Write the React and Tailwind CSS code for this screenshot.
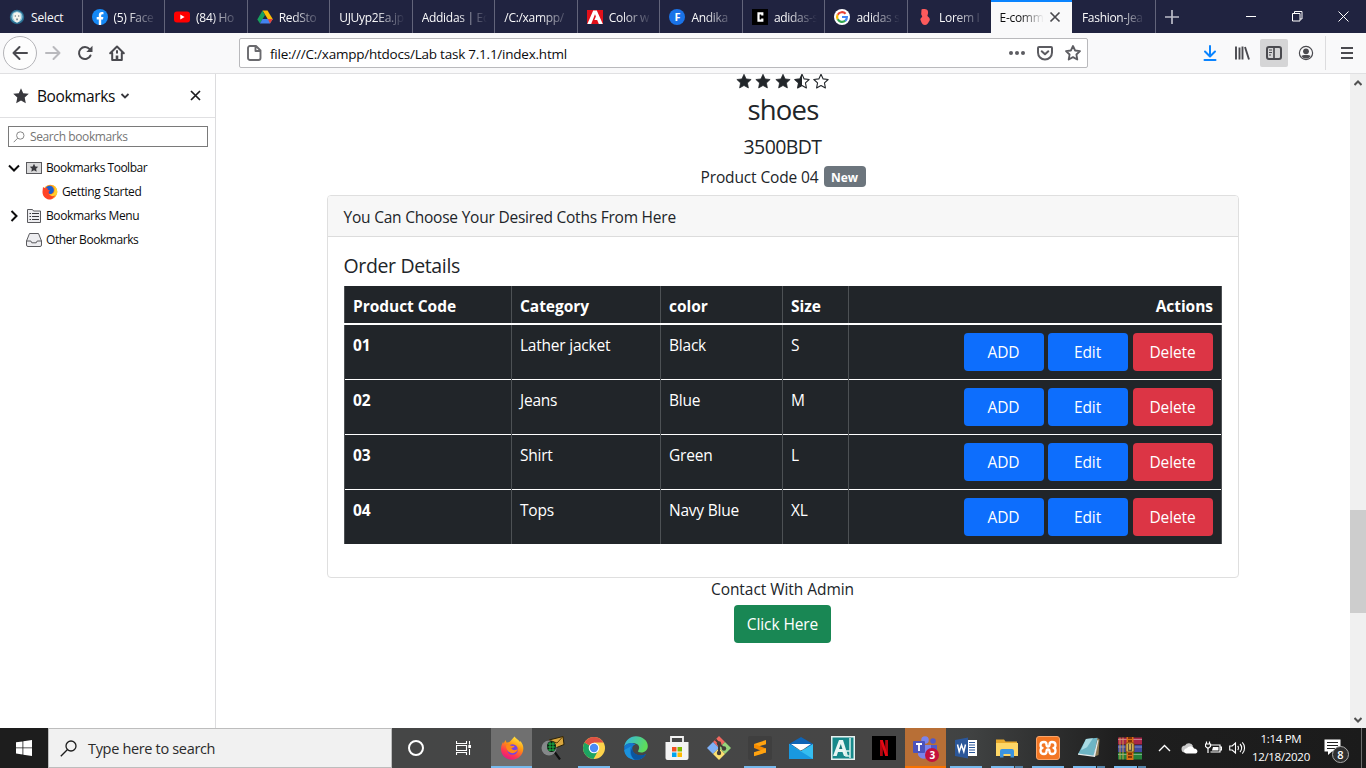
import React from "react";

/* ---------- tab strip ---------- */

const TabIcon = ({ kind }) => {
  switch (kind) {
    case "lion":
      return (
        <svg width="16" height="16" viewBox="0 0 16 16">
          <circle cx="8" cy="8" r="7.200" fill="#2a6f92" />
          <circle cx="8" cy="7.800" r="5.600" fill="#8fc6da" />
          <path d="M4.500 4.500L8 3l3.500 1.500.5 4.500-2 3.500-2 1.300-2-1.300-2-3.500z" fill="#f4f4ee" />
          <path d="M5.700 6.500h1.300v1H5.700zM9 6.500h1.300v1H9zM7.400 9.500h1.300V11.300H7.400z" fill="#4f6470" />
        </svg>
      );
    case "facebook":
      return (
        <svg width="16" height="16" viewBox="0 0 16 16">
          <circle cx="8" cy="8" r="8" fill="#1588f5" />
          <path d="M6.800 16v-5.500H4.700V8h2.100V6.200c0-2.100 1.200-3.200 3-3.200.9 0 1.700.15 1.700.15v2h-1c-1 0-1.300.6-1.300 1.250V8h2.200l-.4 2.500H9.200V16z" fill="#fff" />
        </svg>
      );
    case "youtube":
      return (
        <svg width="16" height="16" viewBox="0 0 16 16">
          <rect x="0" y="2.500" width="16" height="11" rx="3" fill="#f00" />
          <path d="M6.300 5.600v4.800L10.600 8z" fill="#fff" />
        </svg>
      );
    case "drive":
      return (
        <svg width="16" height="16" viewBox="0 0 16 16">
          <path d="M5.500 1.500h5L16 10.500h-5z" fill="#fbbc04" />
          <path d="M5.500 1.500 8 6 3 14.500 .3 10.500z" fill="#17a05d" />
          <path d="M5.500 10H15.700L13 14.500H3z" fill="#4382f0" />
          <path d="M10.900 10h4.900L13 14.500z" fill="#e94335" />
        </svg>
      );
    case "adobe":
      return (
        <svg width="16" height="16" viewBox="0 0 16 16">
          <rect y="1" width="16" height="14" fill="#e1101a" />
          <path d="M6.200 1.500h3.600L15.800 15h-4l-1.600-4H7.400L8.900 7.600 8 5.300 4.200 15H.3z" fill="#fff" />
        </svg>
      );
    case "andika":
      return (
        <span className="flex size-4 items-center justify-center rounded-full bg-[#1a73e8] text-[11px] leading-none font-bold text-white">F</span>
      );
    case "c":
      return (
        <svg width="16" height="16" viewBox="0 0 16 16">
          <rect width="16" height="16" fill="#000" />
          <path d="M10.300 6.500V4.300H6.500v7.400h3.800v-2.200" fill="none" stroke="#fff" strokeWidth="2.200" />
        </svg>
      );
    case "google":
      return (
        <svg width="16" height="16" viewBox="0 0 16 16">
          <circle cx="8" cy="8" r="8" fill="#fff" />
          <g fill="none" strokeWidth="2.200">
            <path d="M11.600 4.700A5 5 0 0 0 3.700 5.700" stroke="#ea4335" />
            <path d="M3.700 5.600a5 5 0 0 0 0 4.800" stroke="#fbbc05" />
            <path d="M3.700 10.300a5 5 0 0 0 7.600 1.400" stroke="#34a853" />
            <path d="M8 8h4.900a5 5 0 0 1-1.700 3.800" stroke="#4285f4" />
          </g>
        </svg>
      );
    case "lorem":
      return (
        <svg width="16" height="16" viewBox="0 0 16 16">
          <path d="M4.500.5C6-.2 9 0 10.300 1c1 1 .9 3.500.3 5C10 7 11 7.500 12 8.500c1.200 1.200 1 3-.2 4.300C11 14.500 10 16 8 16s-3-1.500-3.500-2.500L3.300 10.500c.2-1.500 1.700-2 1.900-3C5 6.500 4.200 6 4.200 5z" fill="#fb5a5c" />
        </svg>
      );
    default:
      return null;
  }
};

const TABS = [
  { icon: "lion", title: "Select", plain: true },
  { icon: "facebook", title: "(5) Face" },
  { icon: "youtube", title: "(84) Ho" },
  { icon: "drive", title: "RedSto" },
  { title: "UJUyp2Ea.jp" },
  { title: "Addidas | Ec" },
  { title: "/C:/xampp/" },
  { icon: "adobe", title: "Color w" },
  { icon: "andika", title: "Andika" },
  { icon: "c", title: "adidas-s" },
  { icon: "google", title: "adidas s" },
  { icon: "lorem", title: "Lorem I", last: true },
];

const FADE = "[mask-image:linear-gradient(to_right,#000_calc(100%-30px),transparent)]";

const TabStrip = () => (
  <div className="flex h-[33px] shrink-0 bg-[#202340] text-[12px] tracking-[-0.3px] text-[#f9f9fa]">
    {TABS.map((t) => (
      <div key={t.title} className={`flex w-[82.55px] shrink-0 items-center pr-[7px] pl-[9px] ${t.last ? "" : "border-r border-[#62647a]"}`}>
        {t.icon && <span className="mr-[6px] shrink-0"><TabIcon kind={t.icon} /></span>}
        <span className={`min-w-0 flex-1 overflow-hidden pt-[2px] whitespace-nowrap ${t.plain ? "tracking-[-0.1px]" : FADE}`}>{t.title}</span>
      </div>
    ))}
    <div className="flex w-[81.400px] shrink-0 items-center border-t-[2px] border-[#0a84ff] bg-[#f9f9fa] pr-[11px] pl-[9px] text-[#0c0c0d]">
      <span className="w-[44px] overflow-hidden whitespace-nowrap [mask-image:linear-gradient(to_right,#000_calc(100%-24px),transparent)]">E-comm</span>
      <svg className="mb-[2px] ml-[5px]" width="12" height="12" viewBox="0 0 12 12"><path d="M1.500 1.500l9 9m0-9l-9 9" stroke="#4a4a4f" strokeWidth="1.700" /></svg>
    </div>
    <div className="flex w-[84px] shrink-0 items-center border-r border-[#62647a] pr-[10px] pl-[10px]">
      <span className="min-w-0 flex-1 overflow-hidden pt-[2px] whitespace-nowrap [mask-image:linear-gradient(to_right,#000_calc(100%-26px),transparent)]">Fashion-Jea</span>
    </div>
    <div className="flex w-[33px] items-center justify-center">
      <svg width="14" height="14" viewBox="0 0 14 14"><path d="M7 0v14M0 7h14" stroke="#bcbdc9" strokeWidth="1.700" /></svg>
    </div>
    <div className="ml-auto flex">
      <div className="flex w-[46px] items-center justify-center"><svg width="10" height="10"><path d="M0 4.500h10" stroke="#fff" /></svg></div>
      <div className="flex w-[46px] items-center justify-center">
        <svg width="11" height="11" fill="none" stroke="#fff"><path d="M.5 2.500h7.500v7.500H.5zM2.500 2.500v-2h7.500v7.500H8" /></svg>
      </div>
      <div className="flex w-[46px] items-center justify-center"><svg width="11" height="11"><path d="M.5.5l10 10m0-10l-10 10" stroke="#fff" /></svg></div>
    </div>
  </div>
);

/* ---------- navigation toolbar ---------- */

const NavBar = () => (
  <div className="flex h-[41px] shrink-0 items-center border-b border-[#e0e0e2] bg-[#f9f9fa] pr-[13px] pl-[3px]">
    <div className="flex size-[34px] items-center justify-center rounded-full border border-[#b4b4b8] bg-[#fdfdfd]">
      <svg width="16" height="16" viewBox="0 0 16 16" fill="none" stroke="#4a4a4f" strokeWidth="2" strokeLinecap="round" strokeLinejoin="round"><path d="M1.500 8H15M7.500 2l-6 6 6 6" /></svg>
    </div>
    <svg className="ml-[8px]" width="16" height="16" viewBox="0 0 16 16" fill="none" stroke="#b9b9bd" strokeWidth="2" strokeLinecap="round" strokeLinejoin="round"><path d="M1 8h13.500M8.500 2l6 6-6 6" /></svg>
    <svg className="ml-[16px]" width="16" height="16" viewBox="0 0 16 16" fill="none" stroke="#4a4a4f" strokeWidth="2" strokeLinecap="round">
      <path d="M12.600 4.200A6 6 0 1 0 13.500 10.500" /><path d="M15.500.8v6.200H9.300z" fill="#4a4a4f" stroke="none" />
    </svg>
    <svg className="ml-[16px]" width="16" height="16" viewBox="0 0 16 16" fill="none" stroke="#4a4a4f" strokeWidth="2" strokeLinecap="round" strokeLinejoin="round">
      <path d="M1.200 8.300L8 1.500l6.800 6.800M3.200 8v7h9.600V8" /><path d="M8 15v-4.500" strokeWidth="2.600" strokeLinecap="butt" /><path d="M8 6v1.800" />
    </svg>
    <div className="ml-[114px] flex h-[30px] w-[849px] shrink-0 items-center rounded-[2px] border border-[#b9b9bc] bg-white pr-[6px] pl-[7px]">
      <svg width="15" height="16" viewBox="0 0 15 16" fill="none" stroke="#6a6a6e" strokeWidth="1.900" strokeLinejoin="round"><path d="M3 1h6l4.500 4.500V13a2 2 0 0 1-2 2H3a2 2 0 0 1-2-2V3a2 2 0 0 1 2-2zM8.500 1v5h5" /></svg>
      <span className="ml-[8px] pt-[2px] text-[13.500px] tracking-[-0.23px] text-[#0c0c0d]">file:///C:/xampp/htdocs/Lab task 7.1.1/index.html</span>
      <svg className="ml-auto" width="16" height="16" viewBox="0 0 16 16" fill="#5c5c61"><circle cx="2" cy="8" r="2" /><circle cx="8" cy="8" r="2" /><circle cx="14" cy="8" r="2" /></svg>
      <svg className="ml-[12px]" width="16" height="16" viewBox="0 0 16 16" fill="none" stroke="#5c5c61" strokeWidth="2" strokeLinecap="round" strokeLinejoin="round"><path d="M2 2h12a1 1 0 0 1 1 1v4.500a7 7 0 0 1-14 0V3a1 1 0 0 1 1-1z" /><path d="M4.700 6.300L8 9.300l3.300-3" /></svg>
      <svg className="ml-[12px]" width="16" height="16" viewBox="0 0 16 16" fill="none" stroke="#5c5c61" strokeWidth="1.800" strokeLinejoin="round"><path d="M8 1l2.100 4.500 4.900.6-3.600 3.400.9 5L8 12.100 3.700 14.500l.9-5L1 6.100l4.900-.6z" /></svg>
    </div>
    <svg className="ml-[114px]" width="16" height="16" viewBox="0 0 16 16" fill="none" stroke="#0a84ff" strokeWidth="2" strokeLinecap="round" strokeLinejoin="round"><path d="M8 1v10M3 6.500l5 5 5-5M2.500 15h11" /></svg>
    <svg className="ml-[16px]" width="16" height="16" viewBox="0 0 16 16" fill="none" stroke="#4a4a4f" strokeWidth="1.900"><path d="M2 1.500v13M5.500 2.500v12M8.500 1.500v13M11 2l4 12.500" /></svg>
    <div className="ml-[10px] flex size-[28px] items-center justify-center rounded-[2px] bg-[#d5d5d6]">
      <svg width="16" height="16" viewBox="0 0 16 16" fill="none" stroke="#4a4a4f"><rect x="1" y="2" width="14" height="12" rx="2" strokeWidth="2" /><path d="M8 2v12" strokeWidth="1.700" /><path d="M3 5h3M3 7.500h3M3 10h2" /></svg>
    </div>
    <svg className="ml-[10px]" width="16" height="16" viewBox="0 0 16 16"><circle cx="8" cy="8" r="6.600" fill="none" stroke="#4a4a4f" strokeWidth="1.200" /><circle cx="8" cy="6.300" r="2.900" fill="#4a4a4f" /><path d="M3.400 11c1-.8 2.500-.9 3-.9h3.200c.5 0 2 .1 3 .9A5.400 5.400 0 0 1 3.400 11z" fill="#4a4a4f" /></svg>
    <span className="ml-[11px] h-[34px] w-px bg-[#dcdcde]" />
    <svg className="ml-auto" width="12" height="14" viewBox="0 0 12 14"><path d="M0 2h12M0 7h12M0 12h12" stroke="#4a4a4f" strokeWidth="2" /></svg>
  </div>
);

/* ---------- bookmarks sidebar ---------- */

const FirefoxLogo = ({ size }) => (
  <svg width={size} height={size} viewBox="0 0 24 24">
    <defs>
      <linearGradient id="fxBody" x1=".8" y1="0" x2=".3" y2="1">
        <stop offset="0" stopColor="#fff14a" /><stop offset=".4" stopColor="#ff980e" /><stop offset=".75" stopColor="#ff3750" /><stop offset="1" stopColor="#e31587" />
      </linearGradient>
    </defs>
    <path d="M14.500.5c1.500 2 4 3.500 5.500 5.500l.3-1C22.500 7.500 23.500 10 23.300 13 23 19 18 23.700 12 23.700S1 19 1 13c0-3 1-5.500 2.200-7.300l.3 2L5.500 4l1 2.500c2 0 3-.2 4-1.500z" fill="url(#fxBody)" />
    <circle cx="12.500" cy="13.500" r="5.300" fill="#7542e5" />
    <path d="M6 9.500c2-1.500 4-.5 5 .3l3.500.2c-.2 1.500-2 1.700-3 2 .3 2.500 4.500 3 6.500.5-1 4.500-5 5.500-8 4-2.500-1-4-4-4-7z" fill="#ff8a16" />
  </svg>
);

const ClassicFirefox = () => (
  <svg width="16" height="16" viewBox="0 0 16 16">
    <circle cx="8.300" cy="7.800" r="7" fill="#ff9a1f" />
    <circle cx="7.600" cy="6" r="4.300" fill="#1a5fd0" />
    <path d="M1 3l2 1.300L5.500 4l.3 1.700L8 6.500 6.500 8l.5 1.500c2 1.500 4 .3 4.700-1.200L14 10c-1 4-4 5.700-7 5.500C3 15 .3 11.500.5 7.500z" fill="#ff4326" />
    <path d="M10 .8c3 2 3.500 5 2 7.700-1 1.500-3 2.300-5 1.500 1.500 2.500 5 3 7 .5-1 2-2.500 3.500-5 4 5-.5 7-4.500 6-8.500-.5-2.500-2.500-4.800-5-5.200z" fill="#ffd02e" />
  </svg>
);

const Chevron = ({ open }) => (
  <svg width="12" height="12" viewBox="0 0 12 12" fill="none" stroke="#0c0c0d" strokeWidth="2"><path d={open ? "M1 3.500l5 5 5-5" : "M3.500 1l5 5-5 5"} /></svg>
);

const Sidebar = () => (
  <div className="flex w-[216px] shrink-0 flex-col border-r border-[#dcdcde] bg-white text-[#0c0c0d]">
    <div className="flex h-[44px] items-center border-b border-[#e0e0e2] pl-[13px]">
      <svg width="16" height="16" viewBox="0 0 16 16" fill="#38383d"><path d="M8 .2l2.200 5 5.600.6-4.100 3.800 1.100 5.700L8 12.500l-4.800 2.800 1.100-5.700L.2 5.800l5.600-.6z" /></svg>
      <span className="ml-[8px] w-[78px] pt-[3px] text-[15.500px] tracking-[-0.42px]">Bookmarks</span>
      <svg className="ml-[5px]" width="10" height="8" viewBox="0 0 10 8" fill="none" stroke="#38383d" strokeWidth="1.800"><path d="M1.500 2L5 5.500 8.500 2" /></svg>
      <svg className="ml-[59.500px]" width="11" height="11" viewBox="0 0 11 11"><path d="M1 1l9 9m0-9l-9 9" stroke="#1c1c1f" strokeWidth="1.700" /></svg>
    </div>
    <div className="mt-[8px] ml-[8px] flex h-[21px] w-[200px] items-center border border-[#7a7a7a] pl-[4px]">
      <svg width="12" height="12" viewBox="0 0 12 12" fill="none" stroke="#888" strokeWidth="1"><circle cx="7.300" cy="4.500" r="3.700" /><path d="M4.700 7.200L.7 11.200" /></svg>
      <span className="ml-[5px] pt-px text-[12px] tracking-[-0.4px] text-[#757575]">Search bookmarks</span>
    </div>
    <div className="mt-[9px] text-[12px] tracking-[-0.48px]">
      <div className="flex h-6 items-center pl-[8px]">
        <Chevron open />
        <svg className="mr-[4px] ml-[6px]" width="16" height="12" viewBox="0 0 16 12"><rect x=".5" y=".5" width="15" height="11" fill="#d9d9da" stroke="#5a5a5e" /><path d="M8 1.800l1.300 2.700 2.900.3-2.100 2 .6 3L8 8.300 5.300 9.800l.6-3-2.100-2 2.900-.3z" fill="#38383d" /></svg>
        <span>Bookmarks Toolbar</span>
      </div>
      <div className="flex h-6 items-center pl-[42px]">
        <ClassicFirefox />
        <span className="ml-[4px] tracking-[-0.36px]">Getting Started</span>
      </div>
      <div className="flex h-6 items-center pl-[8px]">
        <Chevron />
        <svg className="mr-[4px] ml-[6px]" width="16" height="14" viewBox="0 0 16 14"><path d="M1.500.5h5l1 1.500h7v11.500h-13z" fill="#ededf0" stroke="#5a5a5e" /><path d="M6 4.500h7M6 7.500h7M6 10.500h7M3.500 4.500H5M3.500 7.500H5M3.500 10.500H5" stroke="#38383d" /></svg>
        <span className="tracking-[-0.38px]">Bookmarks Menu</span>
      </div>
      <div className="flex h-6 items-center pl-[26px]">
        <svg className="mr-[4px]" width="16" height="14" viewBox="0 0 16 14"><path d="M3.500.5h9l3 7.500v4a1.500 1.500 0 0 1-1.500 1.500H2A1.500 1.500 0 0 1 .5 12V8z" fill="#ededf0" stroke="#5a5a5e" /><path d="M.5 8h4.300l1 1.800h4.400l1-1.800h4.300" fill="none" stroke="#5a5a5e" /></svg>
        <span className="tracking-[-0.44px]">Other Bookmarks</span>
      </div>
    </div>
  </div>
);

/* ---------- page ---------- */

const STAR = "M8 .8l2.150 4.600 5 .6-3.700 3.450.95 5L8 12l-4.400 2.450.95-5L.85 6l5-.6z";
const Star = ({ fill }) => (
  <svg width="16" height="15" viewBox="0 .5 16 15">
    {fill === "full" && <path d={STAR} fill="#212529" stroke="#212529" strokeWidth=".7" strokeLinejoin="round" />}
    {fill !== "full" && <path d={STAR} fill="none" stroke="#212529" strokeWidth="1.100" strokeLinejoin="round" />}
    {fill === "half" && <path d="M8 .8V12l-4.400 2.450.95-5L.85 6l5-.6z" fill="#212529" />}
  </svg>
);

const ROWS = [
  ["01", "Lather jacket", "Black", "S"],
  ["02", "Jeans", "Blue", "M"],
  ["03", "Shirt", "Green", "L"],
  ["04", "Tops", "Navy Blue", "XL"],
];
const GRID = "grid grid-cols-[167px_149px_122px_66px_374px]";
const CELL = "border-l border-[#4d5154]";

const Button = ({ color, children }) => (
  <button className={`h-[38px] w-[80px] rounded-[4px] pr-[7px] pl-[6px] tracking-[-0.1px] text-white ${color}`}>{children}</button>
);

const Row = ({ data, first }) => {
  const inner = first ? "h-[54px] pr-[8px] pl-[8px] pt-[8px]" : "h-[55px] border-t border-white pr-[8px] pl-[8px] pt-[8px]";
  return (
    <div className={GRID}>
      {data.map((v, i) => (
        <div key={i} className={CELL}><div className={`${inner} ${i === 0 ? "font-bold tracking-normal" : ""}`}>{v}</div></div>
      ))}
      <div className={`${CELL} border-r`}>
        <div className={`${inner} flex justify-end`}>
          <Button color="bg-[#0d6efd]">ADD</Button>
          <span className="w-[4px]" />
          <Button color="bg-[#0d6efd]">Edit</Button>
          <span className="w-[5px]" />
          <Button color="bg-[#dc3545]">Delete</Button>
        </div>
      </div>
    </div>
  );
};

const Page = () => (
  <div className="flex min-w-0 flex-1 flex-col items-center bg-white text-[15.500px] leading-[24px] tracking-[-0.22px] text-[#212529]">
    <div className="mr-[1px] flex h-[16px] gap-[3.200px]">
      <Star fill="full" /><Star fill="full" /><Star fill="full" /><Star fill="half" /><Star fill="empty" />
    </div>
    <h3 className="mt-[3px] text-[27.500px] leading-[34px] tracking-[-0.8px]">shoes</h3>
    <h5 className="mr-[1px] mt-[8px] text-[19.500px] leading-[24px] tracking-[-0.6px]">3500BDT</h5>
    <div className="mt-[7px] flex h-[21px] items-center">
      <span className="tracking-[-0.13px]">Product Code 04</span>
      <span className="ml-[5px] flex h-[21px] w-[42px] items-center justify-center rounded-[4px] bg-[#6c757d] pt-[2px] text-[12px] leading-none font-bold tracking-normal text-white">New</span>
    </div>
    <div className="mt-[8px] flex h-[383px] w-[912px] flex-col rounded-[4px] border border-[#dfdfdf]">
      <div className="flex h-[41px] items-center rounded-t-[3px] border-b border-[#dcdcdc] bg-[#f7f7f7] pt-px pl-[15.500px]">You Can Choose Your Desired Coths From Here</div>
      <div className="pt-[17px] pl-[16px]">
        <h5 className="mb-[8px] -ml-[0.500px] text-[19.500px] leading-[24px] tracking-[-0.36px]">Order Details</h5>
        <div className="w-[878px] bg-[#212529] text-white">
          <div className={`${GRID} h-[37px] font-bold tracking-[-0.04px]`}>
            {["Product Code", "Category", "color", "Size"].map((h) => <div key={h} className={`${CELL} pr-[8px] pl-[8px] pt-[8px]`}>{h}</div>)}
            <div className={`${CELL} border-r px-[8px] pt-[8px] text-right`}>Actions</div>
          </div>
          <div className="h-[2px] bg-white" />
          {ROWS.map((r, i) => <Row key={r[0]} data={r} first={i === 0} />)}
        </div>
      </div>
    </div>
    <div className="mt-[-1px] mr-[1px] tracking-[-0.05px]">Contact With Admin</div>
    <button className="mt-[4px] mr-[1px] h-[38px] w-[97px] rounded-[4px] bg-[#198754] tracking-[-0.1px] text-white">Click Here</button>
  </div>
);

const Scrollbar = () => (
  <div className="flex w-[16px] shrink-0 flex-col items-center bg-[#f0f0f0]">
    <div className="flex h-[17px] items-center"><svg width="8" height="6" fill="none" stroke="#505050" strokeWidth="2"><path d="M.5 5L4 1.500 7.500 5" /></svg></div>
    <div className="mt-[419px] h-[103px] w-full bg-[#cdcdcd]" />
    <div className="mt-auto flex h-[17px] items-center"><svg width="8" height="6" fill="none" stroke="#505050" strokeWidth="2"><path d="M.5 1L4 4.500 7.500 1" /></svg></div>
  </div>
);

/* ---------- taskbar ---------- */

const AppIcon = ({ kind }) => {
  switch (kind) {
    case "firefox":
      return <FirefoxLogo size={24} />;
    case "maildish":
      return (
        <svg width="24" height="24" viewBox="0 0 24 24">
          <path d="M8 4L22 .5l1 8L12 13z" fill="#d9a63e" stroke="#2b2208" />
          <path d="M8 4l8 3L22 .5" fill="none" stroke="#5c400c" />
          <path d="M12 14l3 4 4 5.500" fill="none" stroke="#111" strokeWidth="2.200" />
          <circle cx="8" cy="12" r="7.500" fill="#85888a" /><ellipse cx="10.500" cy="10.500" rx="4.500" ry="5.500" fill="#071f0d" />
          <path d="M7 8h7M6.500 11h8M7 14h7M9 6v9M12 6v9" stroke="#1fbf4e" strokeWidth=".9" />
        </svg>
      );
    case "chrome":
      return (
        <svg width="24" height="24" viewBox="0 0 24 24">
          <circle cx="12" cy="12" r="11" fill="#fdd34b" />
          <path d="M12 12L2.500 6.500A11 11 0 0 0 11.500 23l5-9z" fill="#1da462" />
          <path d="M12 12L2.500 6.500a11 11 0 0 1 19 0H12z" fill="#dd5144" />
          <circle cx="12" cy="12" r="5.300" fill="#fff" /><circle cx="12" cy="12" r="4.200" fill="#4c8bf5" />
        </svg>
      );
    case "edge":
      return (
        <svg width="24" height="24" viewBox="0 0 24 24">
          <defs><linearGradient id="edgeTop" x1="0" x2="1" y2=".3"><stop stopColor="#30b4ee" /><stop offset="1" stopColor="#5edc5a" /></linearGradient></defs>
          <path d="M.3 10.500C1 4.500 6 .2 12 .2c6.500 0 11.800 4.500 11.800 9.800 0 4-3 6.500-6.500 6.500-2.500 0-4-1-3-2 2-3 .5-6.500-3.500-7.200C6.500 6.600 2.500 8 .3 10.500z" fill="url(#edgeTop)" />
          <path d="M.3 10.500c2-4 9-4.500 11.200-2C8 9 7.500 13 9 15.800c2.500 4 8 5.200 13 2.200-2 4-6 6-10 5.900C5 23.800-.6 17.500.3 10.500z" fill="#1477d0" />
          <path d="M9.500 9C5 10.500 4 19 10.500 23.700 4 23 .5 19 .2 14z" fill="#1b92dd" />
          <path d="M8.300 12c-.3 5.500 6.700 9.500 13.700 6-2 4-7 6.500-11 5.700-4-2.200-5.200-8-2.700-11.700z" fill="#0b559f" />
        </svg>
      );
    case "store":
      return (
        <svg width="24" height="24" viewBox="0 0 24 24">
          <path d="M6 7V1h12v6" fill="none" stroke="#f3f3f3" strokeWidth="1.800" />
          <path d="M.5 6h23v16a2 2 0 0 1-2 2h-19a2 2 0 0 1-2-2z" fill="#f3f3f3" />
          <path d="M7 11h4.500v4.500H7z" fill="#f25022" /><path d="M12.500 11H17v4.500h-4.500z" fill="#7fba00" /><path d="M7 16.500h4.500V21H7z" fill="#00a4ef" /><path d="M12.500 16.500H17V21h-4.500z" fill="#ffb900" />
        </svg>
      );
    case "git":
      return (
        <svg width="24" height="24" viewBox="0 0 24 24">
          <path d="M12 0l6 6-6 6-6-6z" fill="#f0675f" /><path d="M6 6l6 6-6 6-6-6z" fill="#7fb0f5" /><path d="M18 6l6 6-6 6-6-6z" fill="#97d47a" /><path d="M12 12l6 6-6 6-6-6z" fill="#fbe071" />
          <path d="M8.500 3.500l3.500 3.800V17M12 7.500l5 5" stroke="#413c38" strokeWidth="2" fill="none" /><circle cx="12" cy="7.500" r="2.200" fill="#413c38" /><circle cx="17" cy="12.500" r="2.200" fill="#413c38" /><circle cx="12" cy="17" r="2.200" fill="#413c38" />
        </svg>
      );
    case "sublime":
      return (
        <svg width="24" height="24" viewBox="0 0 24 24">
          <rect width="24" height="24" rx="2" fill="#3f3f3f" />
          <path d="M6 8l12-4v4.200L6 12z" fill="#ffa20f" /><path d="M6 8l12 4.500v4L6 12z" fill="#f58a00" /><path d="M6 16.300l12-4v4.200L6 20.300z" fill="#ffa20f" />
        </svg>
      );
    case "mail":
      return (
        <svg width="24" height="24" viewBox="0 0 24 24">
          <path d="M0 8L12 1l12 7v3H0z" fill="#0f64b5" />
          <path d="M0 8l12 7 12-7v15H0z" fill="#35bdf0" /><path d="M0 8l24 15H0z" fill="#1998e0" /><path d="M2 8h20l-8 5.500-2.500 1z" fill="#fff" />
        </svg>
      );
    case "autodesk":
      return (
        <svg width="24" height="24" viewBox="0 0 24 24">
          <rect x=".75" y=".75" width="22.500" height="22.500" fill="#16888a" stroke="#e6f0ef" strokeWidth="1.500" />
          <path d="M2 20L8 4h4l5 16h-4l-1.500-4H7l-1.300 4z" fill="#e8f5f3" /><path d="M8 13l1.800-5 1.600 5z" fill="#187478" />
          <path d="M19 2v20M15 15h4v5h-4z" stroke="#d4eeea" fill="none" strokeWidth="1.500" />
        </svg>
      );
    case "netflix":
      return (
        <svg width="24" height="24" viewBox="0 0 24 24">
          <rect width="24" height="24" fill="#000" />
          <path d="M8 4h2.800v16H8zM13.200 4H16v16h-2.800z" fill="#b1060f" /><path d="M8 4h2.800L16 20h-2.800z" fill="#e50914" />
        </svg>
      );
    case "teams":
      return (
        <div className="relative size-[24px]">
          <svg width="24" height="24" viewBox="0 0 24 24">
            <circle cx="12" cy="4" r="3.800" fill="#7b83eb" /><circle cx="20" cy="5" r="2.800" fill="#5059c9" />
            <path d="M17 9h7v7a4 4 0 0 1-7 2z" fill="#5059c9" /><path d="M5 9h13v8a7 7 0 0 1-13 2z" fill="#7b83eb" />
            <rect y="5" width="12" height="12" rx="1" fill="#4b53bc" /><path d="M3 8h6M6 8v7" stroke="#fff" strokeWidth="1.800" />
          </svg>
          <span className="absolute top-[12px] left-[12px] flex size-[14px] items-center justify-center rounded-full bg-[#c4113d] text-[10px] leading-none font-bold text-white">3</span>
        </div>
      );
    case "word":
      return (
        <svg width="24" height="24" viewBox="0 0 24 24">
          <path d="M12 4h11v16H12z" fill="#fff" /><path d="M15 6.500h6M15 9h6M15 11.500h6M15 14h6M15 16.500h6" stroke="#2b579a" strokeWidth="1.200" />
          <path d="M1 4L14 1.500v21L1 20z" fill="#2b579a" /><path d="M3.500 8.500l1.700 7 2.300-6.500 2.300 6.500 1.700-7" stroke="#fff" strokeWidth="1.500" fill="none" />
        </svg>
      );
    case "explorer":
      return (
        <svg width="24" height="24" viewBox="0 0 24 24">
          <path d="M1 3.500h8l1.500 2H22V9H1z" fill="#e8a92c" /><path d="M1 7h22v13H1z" fill="#ffd766" />
          <path d="M5 21.500V15a2 2 0 0 1 2-2h10a2 2 0 0 1 2 2v6.500h-3.500V18h-7v3.500z" fill="#3b94e0" />
        </svg>
      );
    case "xampp":
      return (
        <svg width="24" height="24" viewBox="0 0 24 24">
          <rect x=".5" y=".5" width="23" height="23" rx="2.500" fill="#f37623" stroke="#f9a56a" />
          <path d="M8 6c2 0 2.500 1.200 2.500 2.500S11 10.500 12 10.500s1.500-.7 1.500-2S14 6 16 6s3.500 1.300 3.500 3-1 3-2 3c1 0 2 1.300 2 3s-1.500 3-3.500 3-2.500-1.200-2.500-2.500-.5-2-1.500-2-1.500.7-1.500 2S10 18 8 18s-3.500-1.300-3.500-3 1-3 2-3c-1 0-2-1.300-2-3S6 6 8 6z" fill="none" stroke="#fff" strokeWidth="2.300" strokeLinejoin="round" />
        </svg>
      );
    case "notepad":
      return (
        <svg width="24" height="24" viewBox="0 0 24 24">
          <path d="M20 2l2.500 1-1 16-4 1.500z" fill="#8d7a55" />
          <path d="M9 3l11.500-1.300L17 20 1 18z" fill="#6eb5c5" /><path d="M9 3l7-.8-6 9-6 3z" fill="#a9dbe3" />
          <path d="M1 17.500l15.500 2L20.500 4l1 .5L18 21 1 18.800z" fill="#e4eaeb" />
        </svg>
      );
    case "winrar":
      return (
        <svg width="24" height="24" viewBox="0 0 24 24">
          <path d="M0 1.500h24v7H0z" fill="#a72649" /><path d="M0 9h24v7H0z" fill="#3d4aa0" /><path d="M0 16.500h24v7H0z" fill="#24803b" />
          <path d="M0 3.500h24M0 11h24M0 18.500h24" stroke="#ffffff60" /><path d="M2 1.500v22M5 1.500v22" stroke="#d6a84a" strokeWidth=".9" />
          <path d="M8.500 1h7v23h-7z" fill="#d86d15" /><path d="M10 2h4M10 5h4M10 18h4M10 21h4" stroke="#612105" strokeWidth="1.500" />
          <rect x="8" y="7" width="8" height="9" rx="1" fill="#f2cf5e" stroke="#7a4308" /><path d="M10.500 8v6.500h3V8" fill="none" stroke="#65513a" strokeWidth="1.500" />
        </svg>
      );
    default:
      return null;
  }
};

const APPS = [
  { kind: "firefox", bg: "bg-[#707070]", bar: "wide" },
  { kind: "maildish" },
  { kind: "chrome", bar: "one" },
  { kind: "edge" },
  { kind: "store" },
  { kind: "git" },
  { kind: "sublime", bar: "one" },
  { kind: "mail" },
  { kind: "autodesk" },
  { kind: "netflix" },
  { kind: "teams", bg: "bg-[#b86f36]", bar: "alert" },
  { kind: "word", bar: "one" },
  { kind: "explorer", bar: "many" },
  { kind: "xampp", bar: "one" },
  { kind: "notepad", bar: "many" },
  { kind: "winrar", bar: "many" },
];

const Bar = ({ type }) => {
  if (type === "wide") return <span className="h-[2px] w-full bg-[#76b9ed]" />;
  if (type === "alert") return <span className="h-[2px] w-full bg-[#f77100]" />;
  if (type === "one") return <span className="h-[2px] w-[32px] bg-[#76b9ed]" />;
  if (type === "many") return <span className="flex h-[2px] w-[32px]"><span className="w-[23px] bg-[#76b9ed]" /><span className="ml-px flex-1 bg-[#5585ab]" /></span>;
  return <span className="h-[2px]" />;
};

const Taskbar = () => (
  <div className="flex h-[40px] shrink-0 bg-[linear-gradient(to_right,#1d1d1d_0,#1d1d1d_50px,#454646_392px,#464646_900px,#404242_970px,#1e1e1e_1120px,#1b1b1b_1366px)] text-white">
    <div className="flex w-[48px] shrink-0 items-center justify-center">
      <svg width="16" height="16" viewBox="0 0 16 16" fill="#fff"><path d="M0 2.300l6.500-.9v6.100H0zM7.300 1.300L16 0v7.500H7.300zM0 8.300h6.500v6.200L0 13.600zM7.300 8.300H16V16l-8.700-1.300z" /></svg>
    </div>
    <div className="flex w-[344px] shrink-0 items-center border border-[#bdbdbd] bg-[#f1f1f1] pl-[11px] text-[#2b2b2b]">
      <svg width="17" height="17" viewBox="0 0 17 17" fill="none" stroke="#1d1d1d" strokeWidth="1.300"><circle cx="11" cy="6" r="5" /><path d="M7.500 9.500L.8 16.200" /></svg>
      <span className="ml-[11px] pt-px text-[14.500px] tracking-[-0.33px]">Type here to search</span>
    </div>
    <div className="flex w-[48px] shrink-0 items-center justify-center"><span className="size-[16px] rounded-full border-[2.200px] border-white" /></div>
    <div className="flex w-[48px] shrink-0 items-center justify-center">
      <svg width="16" height="16" viewBox="0 0 16 16" fill="none" stroke="#fff" strokeWidth="1.100"><path d="M.5 1v2.500h10V1M.5 5.500h10v5H.5zM.5 15v-2.500h10V15M13.500 1v3.500M13.500 9v6" /><path d="M12.300 5h2.700v3h-2.700z" fill="#fff" stroke="none" /></svg>
    </div>
    <div className="ml-[3px] flex shrink-0">
      {APPS.map((a, i) => (
        <div key={a.kind} className={`flex shrink-0 flex-col items-center ${i < 10 ? "w-[41.400px]" : "w-[41px]"} ${a.bg || ""}`}>
          <div className="flex h-[38px] items-center pt-[2px]"><AppIcon kind={a.kind} /></div>
          <Bar type={a.bar} />
        </div>
      ))}
    </div>
    <div className="flex flex-1 items-center pl-[7px]">
      <svg width="13" height="8" viewBox="0 0 13 8" fill="none" stroke="#fff" strokeWidth="1.400"><path d="M1 7l5.500-5.500L12 7" /></svg>
      <svg className="ml-[10px]" width="17" height="12" viewBox="0 0 17 12"><path d="M4 10.500a3.500 3.500 0 0 1 0-7A4.500 4.500 0 0 1 12 4l-5 6.500z" fill="#c9c9c9" /><path d="M5 11.500c-3-1-2.500-5 1-5.300C8 3.500 12 3.500 13 6.500c4 0 4.500 4.500 1.500 5z" fill="#fff" /></svg>
      <svg className="ml-[7px]" width="17" height="14" viewBox="0 0 17 14" fill="none" stroke="#fff" strokeWidth="1.200"><path d="M6 4h9v7H5.500M15 6h1.500v3H15" /><path d="M8 6h5.500v3.500H7z" fill="#fff" stroke="none" /><path d="M1.500.5V3M4.500.5V3M.5 3h5v2.500L3 7.500.5 5.500zM3 7.500V12" /></svg>
      <svg className="ml-[7px]" width="17" height="14" viewBox="0 0 17 14" fill="none" stroke="#fff" strokeWidth="1.100"><path d="M.7 5h2.500L6.500 2v10L3.200 9H.7zM8.700 5c1 1 1 3 0 4M11 3c2.200 2.200 2.200 5.800 0 8M13.300 1.300c3 3 3 8.400 0 11.400" /></svg>
      <div className="ml-[5px] w-[60px] pb-px text-center text-[11.500px] leading-[18px] tracking-[-0.3px] whitespace-nowrap"><div>1:14 PM</div><div>12/18/2020</div></div>
      <div className="relative ml-[13px] h-[24px] w-[25px]">
        <svg width="18" height="18" viewBox="0 0 18 18" className="mt-[3px]"><path d="M.5.500h16v12H8l-4 3.500v-3.500H.5z" fill="#fff" /><path d="M3 3.500h11M3 6.500h11M3 9.500h8" stroke="#222" /></svg>
        <span className="absolute top-[10px] left-[8px] flex size-[17px] items-center justify-center rounded-full border border-[#a9a9a9] bg-[#303030] text-[11px] leading-none font-semibold">8</span>
      </div>
    </div>
    <span className="mr-[4px] w-px bg-[#6d6d6d]" />
  </div>
);

export default function App() {
  return (
    <div className="flex h-[768px] w-[1366px] flex-col overflow-hidden bg-white font-['Open_Sans','Noto_Sans',sans-serif]">
      <TabStrip />
      <NavBar />
      <div className="flex min-h-0 flex-1">
        <Sidebar />
        <Page />
        <Scrollbar />
      </div>
      <Taskbar />
    </div>
  );
}
